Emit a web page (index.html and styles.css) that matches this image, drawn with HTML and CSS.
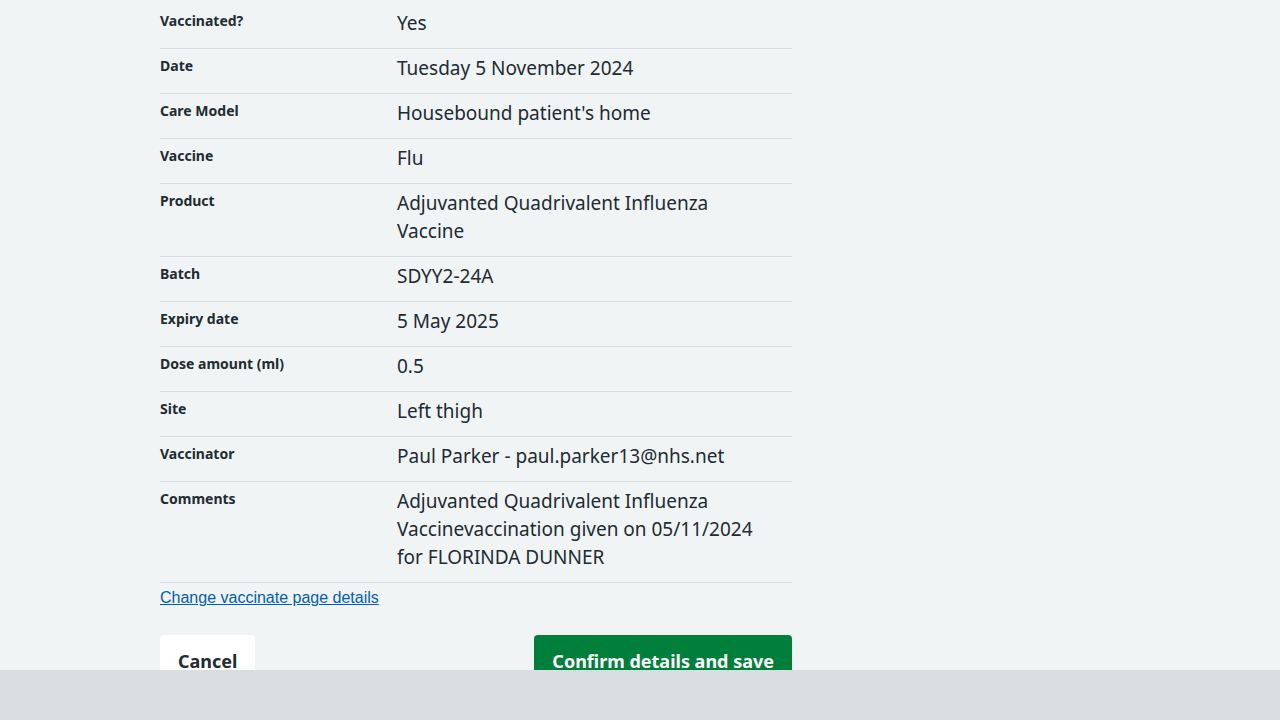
FILE: index.html
```html
<!DOCTYPE html>
<html lang="en">
<head>
<meta charset="utf-8">
<title>Check and confirm</title>
<link rel="stylesheet" href="styles.css">
</head>
<body>
<main class="page">
  <dl class="summary">
    <div class="row"><dt class="key">Vaccinated?</dt><dd class="value">Yes</dd></div>
    <div class="row"><dt class="key">Date</dt><dd class="value">Tuesday 5 November 2024</dd></div>
    <div class="row"><dt class="key">Care Model</dt><dd class="value">Housebound patient's home</dd></div>
    <div class="row"><dt class="key">Vaccine</dt><dd class="value">Flu</dd></div>
    <div class="row"><dt class="key">Product</dt><dd class="value">Adjuvanted Quadrivalent Influenza Vaccine</dd></div>
    <div class="row"><dt class="key">Batch</dt><dd class="value">SDYY2-24A</dd></div>
    <div class="row"><dt class="key">Expiry date</dt><dd class="value">5 May 2025</dd></div>
    <div class="row"><dt class="key">Dose amount (ml)</dt><dd class="value">0.5</dd></div>
    <div class="row"><dt class="key">Site</dt><dd class="value">Left thigh</dd></div>
    <div class="row"><dt class="key">Vaccinator</dt><dd class="value">Paul Parker - paul.parker13@nhs.net</dd></div>
    <div class="row"><dt class="key">Comments</dt><dd class="value">Adjuvanted Quadrivalent Influenza Vaccinevaccination given on 05/11/2024 for FLORINDA DUNNER</dd></div>
  </dl>
  <a class="change-link" href="#">Change vaccinate page details</a>
  <div class="actions">
    <button class="btn btn-secondary" type="button">Cancel</button>
    <button class="btn btn-primary" type="button">Confirm details and save</button>
  </div>
</main>
<div class="footer-bar"></div>
</body>
</html>
```
FILE: styles.css
```css
html, body {
  margin: 0;
  padding: 0;
  background: #f0f4f5;
  color: #212b32;
  font-family: "Noto Sans", "Open Sans", sans-serif;
}
.page {
  width: 632px;
  margin-left: 160px;
  padding-top: 4px;
  padding-bottom: 80px;
}
.summary {
  margin: 0;
}
.row {
  display: grid;
  grid-template-columns: 237px 1fr;
  border-bottom: 1px solid #d8dde0;
}
.key {
  margin: 0;
  padding: 5px 16px 8px 0;
  font-weight: 700;
  font-size: 14px;
  line-height: 24px;
}
.value {
  margin: 0;
  padding: 5px 24px 11px 0;
  font-size: 19px;
  line-height: 28px;
}
.change-link {
  display: inline-block;
  font-family: "Liberation Sans", Arial, sans-serif;
  font-size: 16px;
  line-height: 24px;
  margin-top: 3px;
  color: #005eb8;
  text-decoration: underline;
}
.actions {
  display: flex;
  justify-content: space-between;
  margin-top: 25px;
}
.btn {
  font-family: inherit;
  font-weight: 700;
  font-size: 18px;
  line-height: 28px;
  padding: 10px 16px 14px;
  border: 2px solid transparent;
  border-radius: 4px;
  cursor: pointer;
}
.btn-secondary {
  background: #ffffff;
  color: #212b32;
}
.btn-primary {
  background: #007f3b;
  color: #ffffff;
}
.footer-bar {
  position: fixed;
  left: 0;
  right: 0;
  bottom: 0;
  height: 50px;
  background: #d8dde0;
}
```
